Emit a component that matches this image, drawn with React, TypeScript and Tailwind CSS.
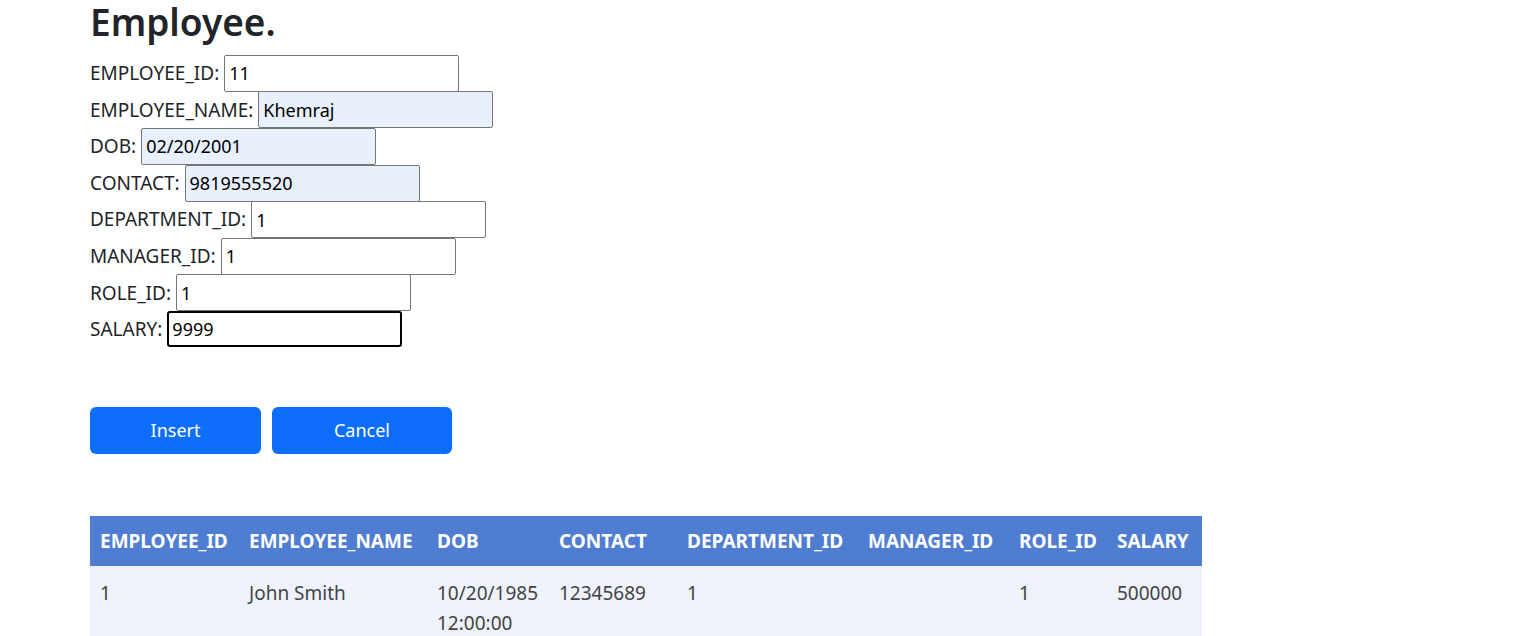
import React, { useState } from 'react';

type Employee = {
  EMPLOYEE_ID: string;
  EMPLOYEE_NAME: string;
  DOB: string;
  CONTACT: string;
  DEPARTMENT_ID: string;
  MANAGER_ID: string;
  ROLE_ID: string;
  SALARY: string;
};

const fields: { key: keyof Employee; filled?: boolean }[] = [
  { key: 'EMPLOYEE_ID' },
  { key: 'EMPLOYEE_NAME', filled: true },
  { key: 'DOB', filled: true },
  { key: 'CONTACT', filled: true },
  { key: 'DEPARTMENT_ID' },
  { key: 'MANAGER_ID' },
  { key: 'ROLE_ID' },
  { key: 'SALARY' },
];

// column widths taken from the screenshot
const columns: { key: keyof Employee; width: string }[] = [
  { key: 'EMPLOYEE_ID', width: 'w-[149px]' },
  { key: 'EMPLOYEE_NAME', width: 'w-[188px]' },
  { key: 'DOB', width: 'w-[122px]' },
  { key: 'CONTACT', width: 'w-[128px]' },
  { key: 'DEPARTMENT_ID', width: 'w-[181px]' },
  { key: 'MANAGER_ID', width: 'w-[151px]' },
  { key: 'ROLE_ID', width: 'w-[98px]' },
  { key: 'SALARY', width: 'w-[95px]' },
];

const rows: Employee[] = [
  {
    EMPLOYEE_ID: '1',
    EMPLOYEE_NAME: 'John Smith',
    DOB: '10/20/1985 12:00:00',
    CONTACT: '12345689',
    DEPARTMENT_ID: '1',
    MANAGER_ID: '',
    ROLE_ID: '1',
    SALARY: '500000',
  },
];

const App: React.FC = () => {
  const [form, setForm] = useState<Employee>({
    EMPLOYEE_ID: '11',
    EMPLOYEE_NAME: 'Khemraj',
    DOB: '02/20/2001',
    CONTACT: '9819555520',
    DEPARTMENT_ID: '1',
    MANAGER_ID: '1',
    ROLE_ID: '1',
    SALARY: '9999',
  });

  const update = (key: keyof Employee, value: string) =>
    setForm(prev => ({ ...prev, [key]: value }));

  return (
    <div className="min-h-screen bg-white font-['Noto_Sans',sans-serif] text-[#212529]">
      <div className="pl-[90px] pt-[2px]">
        <h2 className="text-[37px] leading-[40px] font-semibold mb-[13px]">Employee.</h2>

        {/* Form */}
        <div className="flex flex-col">
          {fields.map(f => (
            <div key={f.key} className="flex items-center h-[36.6px]">
              <label className="text-[19px] mr-[5px]">{f.key}:</label>
              <input
                value={form[f.key]}
                onChange={e => update(f.key, e.target.value)}
                className={
                  f.key === 'SALARY'
                    ? 'w-[235px] h-[36px] px-[3px] text-[18px] text-black border-2 border-black rounded-[3px] bg-white outline-none'
                    : f.filled
                    ? 'w-[235px] h-[37px] px-[4px] text-[18px] text-black border border-[#767676] rounded-[2px] bg-[#e8f0fe] outline-none'
                    : 'w-[235px] h-[37px] px-[4px] text-[18px] text-black border border-[#767676] rounded-[2px] bg-white outline-none'
                }
              />
            </div>
          ))}
        </div>

        {/* Actions */}
        <div className="flex gap-[11px] mt-[59px]">
          <button className="w-[171px] h-[47px] bg-[#0d6efd] text-white text-[18px] rounded-[6px]">Insert</button>
          <button className="w-[180px] h-[47px] bg-[#0d6efd] text-white text-[18px] rounded-[6px]">Cancel</button>
        </div>

        {/* Table */}
        <table className="mt-[62px] w-[1112px] table-fixed border-collapse text-[19px]">
          <thead>
            <tr className="bg-[#4f7dd2] text-white h-[50px]">
              {columns.map(c => (
                <th key={c.key} className={`${c.width} px-[10px] text-left font-bold whitespace-nowrap`}>
                  {c.key}
                </th>
              ))}
            </tr>
          </thead>
          <tbody>
            {rows.map(r => (
              <tr key={r.EMPLOYEE_ID} className="bg-[#edf2fb] text-[#444]">
                {columns.map(c => (
                  <td key={c.key} className="px-[10px] pt-[12px] pb-[10px] align-top leading-[30px]">
                    {r[c.key]}
                  </td>
                ))}
              </tr>
            ))}
          </tbody>
        </table>
      </div>
    </div>
  );
};

export default App;
